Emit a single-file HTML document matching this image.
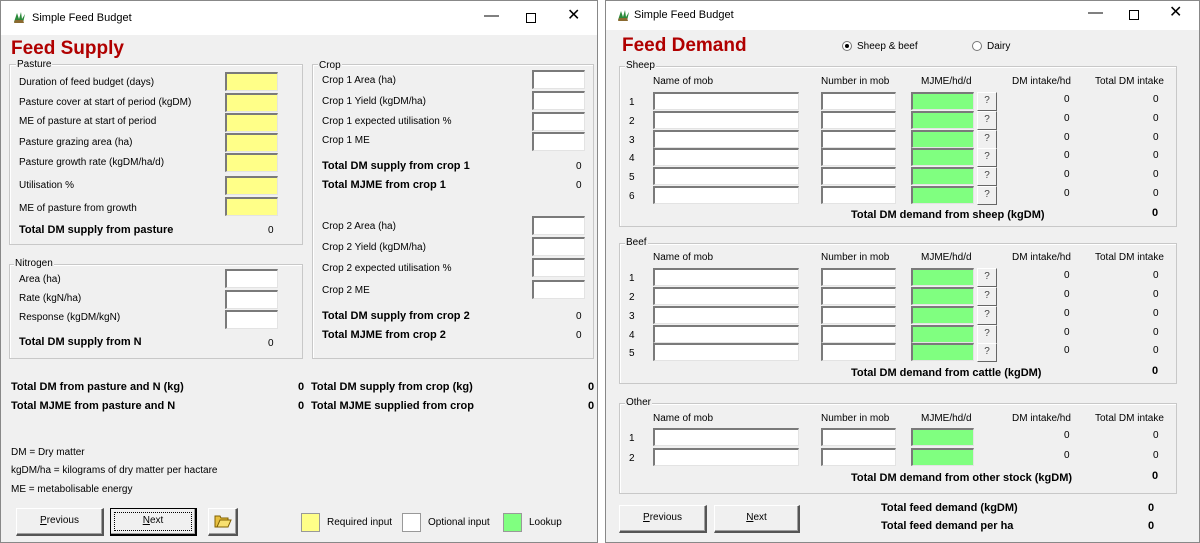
<!DOCTYPE html><html><head><meta charset="utf-8"><style>
*{margin:0;padding:0;box-sizing:border-box}
body{width:1200px;height:543px;background:#fff;position:relative;overflow:hidden;font-family:"Liberation Sans",sans-serif;font-size:10px;color:#000}
.w{position:absolute;top:0;height:543px;background:#f0f0f0;border:1px solid #888}
.tb{position:absolute;left:0;right:0;top:0;background:#fff}
.a{position:absolute;white-space:nowrap;line-height:13px}
.b{font-weight:bold;font-size:11px}
.g{position:absolute;border:1px solid #c8c8c8;box-shadow:inset 1px 1px 0 #fff}
.gl{position:absolute;background:#f0f0f0;padding:0 1px;line-height:12px}
.i{position:absolute;height:19px;border-top:2px solid #7a7a7a;border-left:2px solid #7a7a7a;border-right:1px solid #e3e3e3;border-bottom:1px solid #e3e3e3;background:#fff}
.y{background:#ffff88}.gr{background:#80ff80}
.q{position:absolute;width:20px;height:19px;background:#f0f0f0;border:1px solid #fff;border-right-color:#666;border-bottom-color:#666;text-align:center;line-height:16px;color:#444}
.btn{position:absolute;height:28px;border:1px solid #fff;border-right:2px solid #555;border-bottom:2px solid #555;background:#f0f0f0;text-align:center;line-height:24px;box-shadow:inset -1px -1px 0 #a0a0a0}
.h{position:absolute;color:#b00000;font-weight:bold;font-size:19px}
</style></head><body>

<div class="w" style="left:0;width:598px">
<div class="tb" style="height:34px"></div>
<svg style="position:absolute;left:10px;top:8px" width="16" height="16"><path d="M3 13 L6 4 L8 10 L10 3 L11 10 L14 5 L12 14Z" fill="#2a8a3a"/><path d="M3 14 L13 14 L12 11 L4 11Z" fill="#8a6a30"/></svg>
<div class="a" style="left:31px;top:11px;font-size:11px">Simple Feed Budget</div>
<div class="a" style="left:483px;top:8px;font-size:15px">&#8212;</div>
<div style="position:absolute;left:525px;top:12px;width:10px;height:10px;border:1px solid #000"></div>
<div class="a" style="left:566px;top:8px;font-size:16px">&#10005;</div>
<div class="h" style="left:10px;top:37px">Feed Supply</div>

<div class="g" style="left:8px;top:63px;width:294px;height:181px"></div><div class="gl" style="left:15px;top:58px">Pasture</div>
<div class="a" style="left:18px;top:75px">Duration of feed budget (days)</div>
<div class="a" style="left:18px;top:95px">Pasture cover at start of period (kgDM)</div>
<div class="a" style="left:18px;top:114px">ME of pasture at start of period</div>
<div class="a" style="left:18px;top:135px">Pasture grazing area (ha)</div>
<div class="a" style="left:18px;top:155px">Pasture growth rate (kgDM/ha/d)</div>
<div class="a" style="left:18px;top:178px">Utilisation %</div>
<div class="a" style="left:18px;top:201px">ME of pasture from growth</div>
<div class="a b" style="left:18px;top:223px">Total DM supply from pasture</div>
<div class="a" style="left:267px;top:223px">0</div>
<div class="i y" style="left:224px;top:71px;width:53px"></div>
<div class="i y" style="left:224px;top:92px;width:53px"></div>
<div class="i y" style="left:224px;top:112px;width:53px"></div>
<div class="i y" style="left:224px;top:132px;width:53px"></div>
<div class="i y" style="left:224px;top:152px;width:53px"></div>
<div class="i y" style="left:224px;top:175px;width:53px"></div>
<div class="i y" style="left:224px;top:196px;width:53px"></div>

<div class="g" style="left:8px;top:263px;width:294px;height:95px"></div><div class="gl" style="left:13px;top:257px">Nitrogen</div>
<div class="a" style="left:18px;top:272px">Area (ha)</div>
<div class="a" style="left:18px;top:291px">Rate (kgN/ha)</div>
<div class="a" style="left:18px;top:310px">Response (kgDM/kgN)</div>
<div class="a b" style="left:18px;top:335px">Total DM supply from N</div>
<div class="a" style="left:267px;top:336px">0</div>
<div class="i" style="left:224px;top:268px;width:53px"></div>
<div class="i" style="left:224px;top:289px;width:53px"></div>
<div class="i" style="left:224px;top:309px;width:53px"></div>

<div class="g" style="left:311px;top:63px;width:282px;height:295px"></div><div class="gl" style="left:317px;top:59px">Crop</div>
<div class="a" style="left:321px;top:73px">Crop 1 Area (ha)</div>
<div class="a" style="left:321px;top:94px">Crop 1 Yield (kgDM/ha)</div>
<div class="a" style="left:321px;top:114px">Crop 1 expected utilisation %</div>
<div class="a" style="left:321px;top:133px">Crop 1 ME</div>
<div class="a b" style="left:321px;top:159px">Total DM supply from crop 1</div>
<div class="a b" style="left:321px;top:178px">Total MJME from crop 1</div>
<div class="a" style="left:575px;top:159px">0</div><div class="a" style="left:575px;top:178px">0</div>
<div class="i" style="left:531px;top:69px;width:53px"></div>
<div class="i" style="left:531px;top:90px;width:53px"></div>
<div class="i" style="left:531px;top:111px;width:53px"></div>
<div class="i" style="left:531px;top:131px;width:53px"></div>
<div class="a" style="left:321px;top:219px">Crop 2 Area (ha)</div>
<div class="a" style="left:321px;top:240px">Crop 2 Yield (kgDM/ha)</div>
<div class="a" style="left:321px;top:261px">Crop 2 expected utilisation %</div>
<div class="a" style="left:321px;top:283px">Crop 2 ME</div>
<div class="a b" style="left:321px;top:309px">Total DM supply from crop 2</div>
<div class="a b" style="left:321px;top:328px">Total MJME from crop 2</div>
<div class="a" style="left:575px;top:309px">0</div><div class="a" style="left:575px;top:328px">0</div>
<div class="i" style="left:531px;top:215px;width:53px"></div>
<div class="i" style="left:531px;top:236px;width:53px"></div>
<div class="i" style="left:531px;top:257px;width:53px"></div>
<div class="i" style="left:531px;top:279px;width:53px"></div>

<div class="a b" style="left:10px;top:380px">Total DM from pasture and N (kg)</div>
<div class="a b" style="left:10px;top:399px">Total MJME from pasture and N</div>
<div class="a b" style="left:297px;top:380px">0</div><div class="a b" style="left:297px;top:399px">0</div>
<div class="a b" style="left:310px;top:380px">Total DM supply from crop (kg)</div>
<div class="a b" style="left:310px;top:399px">Total MJME supplied from crop</div>
<div class="a b" style="left:587px;top:380px">0</div><div class="a b" style="left:587px;top:399px">0</div>

<div class="a" style="left:10px;top:445px">DM = Dry matter</div>
<div class="a" style="left:10px;top:463px">kgDM/ha = kilograms of dry matter per hactare</div>
<div class="a" style="left:10px;top:482px">ME = metabolisable energy</div>
<div class="btn" style="left:15px;top:507px;width:88px"><u>P</u>revious</div>
<div class="btn" style="left:109px;top:507px;width:87px;border:1px solid #000;border-right:2px solid #000;border-bottom:2px solid #000"><div style="position:absolute;left:3px;top:3px;right:3px;bottom:3px;border:1px dotted #000"></div><u>N</u>ext</div>
<div class="btn" style="left:207px;top:507px;width:30px"><svg width="18" height="16" style="margin-top:4px"><path d="M1 3h5l1 2h7v9H1z" fill="#e8c040" stroke="#806000"/><path d="M3 14l3-7h11l-3 7z" fill="#f8e070" stroke="#806000"/></svg></div>
<div style="position:absolute;left:300px;top:512px;width:19px;height:19px;background:#ffff88;border:1px solid #999"></div>
<div class="a" style="left:326px;top:515px">Required input</div>
<div style="position:absolute;left:401px;top:512px;width:19px;height:19px;background:#fff;border:1px solid #999"></div>
<div class="a" style="left:427px;top:515px">Optional input</div>
<div style="position:absolute;left:502px;top:512px;width:19px;height:19px;background:#80ff80;border:1px solid #999"></div>
<div class="a" style="left:528px;top:515px">Lookup</div>
</div>

<div class="w" style="left:605px;width:595px">
<div class="tb" style="height:29px"></div>
<svg style="position:absolute;left:9px;top:6px" width="16" height="16"><path d="M3 13 L6 4 L8 10 L10 3 L11 10 L14 5 L12 14Z" fill="#2a8a3a"/><path d="M3 14 L13 14 L12 11 L4 11Z" fill="#8a6a30"/></svg>
<div class="a" style="left:28px;top:8px;font-size:11px">Simple Feed Budget</div>
<div class="a" style="left:482px;top:5px;font-size:15px">&#8212;</div>
<div style="position:absolute;left:523px;top:9px;width:10px;height:10px;border:1px solid #000"></div>
<div class="a" style="left:563px;top:5px;font-size:16px">&#10005;</div>
<div class="h" style="left:16px;top:34px">Feed Demand</div>
<div style="position:absolute;left:236px;top:40px;width:10px;height:10px;border-radius:50%;border:1px solid #777;background:#fff"><div style="margin:2px;width:4px;height:4px;border-radius:50%;background:#000"></div></div>
<div class="a" style="left:251px;top:39px">Sheep &amp; beef</div>
<div style="position:absolute;left:366px;top:40px;width:10px;height:10px;border-radius:50%;border:1px solid #777;background:#fff"></div>
<div class="a" style="left:381px;top:39px">Dairy</div>
<div id="R"></div>
<div class="btn" style="left:13px;top:504px;width:88px"><u>P</u>revious</div>
<div class="btn" style="left:108px;top:504px;width:86px"><u>N</u>ext</div>
<div class="a b" style="left:275px;top:501px">Total feed demand (kgDM)</div>
<div class="a b" style="left:275px;top:519px">Total feed demand per ha</div>
<div class="a b" style="left:542px;top:501px">0</div><div class="a b" style="left:542px;top:519px">0</div>
</div>
<script>
(function(){var h='';
function grp(name,top,height,hy,rows,q,ty,tt){
h+='<div class="g" style="left:13px;top:'+top+'px;width:558px;height:'+height+'px"></div><div class="gl" style="left:19px;top:'+(top-6)+'px">'+name+'</div>';
h+='<div class="a" style="left:47px;top:'+hy+'px">Name of mob</div><div class="a" style="left:215px;top:'+hy+'px">Number in mob</div><div class="a" style="left:315px;top:'+hy+'px">MJME/hd/d</div><div class="a" style="left:406px;top:'+hy+'px">DM intake/hd</div><div class="a" style="left:489px;top:'+hy+'px">Total DM intake</div>';
for(var i=0;i<rows.length;i++){var y=rows[i];
h+='<div class="a" style="left:23px;top:'+(y-6)+'px">'+(i+1)+'</div>';
h+='<div class="i" style="left:47px;top:'+(y-10)+'px;width:146px;height:18px"></div>';
h+='<div class="i" style="left:215px;top:'+(y-10)+'px;width:75px;height:18px"></div>';
h+='<div class="i gr" style="left:305px;top:'+(y-10)+'px;width:63px;height:18px"></div>';
if(q)h+='<div class="q" style="left:371px;top:'+(y-10)+'px">?</div>';
h+='<div class="a" style="left:458px;top:'+(y-9)+'px">0</div><div class="a" style="left:547px;top:'+(y-9)+'px">0</div>';}
h+='<div class="a b" style="left:245px;top:'+ty+'px">'+tt+'</div><div class="a b" style="left:546px;top:'+(ty-2)+'px">0</div>';}
grp('Sheep',65,161,74,[101,120,139,157,176,195],1,208,'Total DM demand from sheep (kgDM)');
grp('Beef',242,141,250,[277,296,315,334,352],1,366,'Total DM demand from cattle (kgDM)');
grp('Other',402,91,411,[437,457],0,471,'Total DM demand from other stock (kgDM)');
document.getElementById('R').outerHTML=h;})();
</script>
</body></html>
